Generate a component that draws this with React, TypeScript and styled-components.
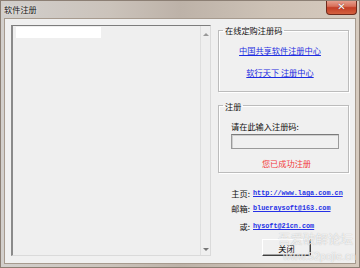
import { Fragment } from 'react';
import { createGlobalStyle, styled } from 'styled-components';

const GlobalStyle = createGlobalStyle`
  html, body {
    margin: 0;
    padding: 0;
    background: #ffffff;
  }
  body {
    font-family: "Noto Sans CJK SC", "Liberation Sans", sans-serif;
  }
`;

const Window = styled.div`
  position: relative;
  width: 360px;
  height: 268px;
  box-sizing: border-box;
  display: flex;
  flex-direction: column;
  border: 1px solid #8c7f74;
  padding: 0 3px 3px 3px;
  background: linear-gradient(
    90deg,
    #d2cfcc 0%,
    #cbc3bb 30%,
    #bdb2a8 50%,
    #cdc2b6 75%,
    #d6cabe 100%
  );
  overflow: hidden;
`;

const TitleBar = styled.div`
  height: 17px;
  display: flex;
  align-items: flex-start;
`;

const Title = styled.span`
  margin-top: 3px;
  font-size: 8.2px;
  line-height: 10px;
  color: #161616;
  text-shadow: 0 0 3px rgba(255, 255, 255, 0.9);
`;

const CloseButton = styled.div`
  margin-left: auto;
  margin-right: -1px;
  margin-top: -1px;
  width: 31px;
  height: 15px;
  box-sizing: border-box;
  border: 1px solid #6e2a1c;
  border-top: none;
  border-radius: 0 0 4px 4px;
  background: linear-gradient(180deg, #e9a796 0%, #d8705a 45%, #c33e26 55%, #d4613f 100%);
  display: flex;
  align-items: center;
  justify-content: center;
  color: #ffffff;
  font-family: "DejaVu Sans", sans-serif;
  font-weight: bold;
  font-size: 10px;
  line-height: 1;
  text-shadow: 0 0 1px #5a1a10;
`;

const Client = styled.div`
  flex: 1;
  display: flex;
  gap: 7px;
  padding: 6px 6px 7px 6px;
  background: #f0f0f0;
  border: 1px solid #a69a8e;
  min-height: 0;
`;

const EditBox = styled.div`
  width: 200px;
  box-sizing: border-box;
  display: flex;
  border-top: 1px solid #7d7d7d;
  border-left: 2px solid #8a8a8a;
  border-right: 1px solid #dadada;
  border-bottom: 1px solid #dadada;
  background: #efefef;
`;

const EditText = styled.div`
  flex: 1;
  padding: 1px 0 0 3px;
`;

const Selection = styled.div`
  width: 85px;
  height: 11px;
  background: #ffffff;
  filter: blur(0.6px);
`;

const ScrollBar = styled.div`
  width: 9px;
  border-left: 1px solid #dedede;
  display: flex;
  flex-direction: column;
  justify-content: space-between;
  align-items: center;
  padding: 7px 0 4px;
`;

const Arrow = styled.div<{ $down?: boolean }>`
  width: 0;
  height: 0;
  border-left: 3px solid transparent;
  border-right: 3px solid transparent;
  ${(p) =>
    p.$down ? 'border-top: 3px solid #777;' : 'border-bottom: 3px solid #999;'}
`;

const SidePane = styled.div`
  width: 131px;
  display: flex;
  flex-direction: column;
`;

const Group = styled.fieldset<{ $height: number; $gap?: number }>`
  margin: ${(p) => p.$gap ?? 0}px 0 0;
  padding: 0 4px;
  height: ${(p) => p.$height}px;
  box-sizing: border-box;
  border: 1px solid #bcbcbc;
  box-shadow: inset 1px 1px 0 #ffffff, 1px 1px 0 #ffffff;
  display: flex;
  flex-direction: column;
`;

const Caption = styled.legend`
  padding: 0 2px;
  font-size: 8.2px;
  line-height: 10px;
  color: #111;
`;

const LinkLine = styled.a<{ $top: number }>`
  display: block;
  margin-top: ${(p) => p.$top}px;
  padding-right: 7px;
  text-align: center;
  font-size: 8.2px;
  line-height: 10px;
  color: #1c2ce0;
  text-decoration: underline;
`;

const FieldLabel = styled.div`
  margin: 10px 0 0 8px;
  font-size: 8.2px;
  line-height: 10px;
  color: #111;
`;

const CodeInput = styled.input`
  margin: 3px 0 0 8px;
  width: 108px;
  height: 15px;
  box-sizing: border-box;
  border: 1px solid #9a9a9a;
  border-top-color: #7a7a7a;
  box-shadow: inset 1px 1px 0 #cfcfcf;
  background: #f0f0f0;
  padding: 0;
`;

const Success = styled.div`
  margin-top: 9px;
  padding-left: 6px;
  text-align: center;
  font-size: 8.2px;
  line-height: 10px;
  color: #f23a3a;
`;

const Contacts = styled.div`
  margin-top: 15px;
  display: grid;
  grid-template-columns: 32px auto;
  column-gap: 3px;
  align-items: center;
`;

const ContactLabel = styled.span<{ $top: number }>`
  margin-top: ${(p) => p.$top}px;
  text-align: right;
  font-size: 8.2px;
  line-height: 10px;
  color: #111;
`;

const MonoLink = styled.a<{ $top: number }>`
  margin-top: ${(p) => p.$top}px;
  font-family: "Liberation Mono", "DejaVu Sans Mono", monospace;
  font-weight: bold;
  font-size: 6.8px;
  line-height: 10px;
  color: #2530e6;
  text-decoration: underline;
`;

const CloseBtn = styled.button`
  margin: 8px 0 0 44px;
  width: 49px;
  height: 17px;
  box-sizing: border-box;
  padding: 0;
  background: #f0f0f0;
  border: 1px solid;
  border-color: #ffffff #404040 #404040 #ffffff;
  box-shadow: inset -1px -1px 0 #a0a0a0;
  font-family: "Noto Sans CJK SC", sans-serif;
  font-size: 8.2px;
  line-height: 10px;
  color: #111;
`;

const Watermark = styled.div`
  position: absolute;
  right: 3px;
  bottom: 5px;
  display: flex;
  flex-direction: column;
  align-items: flex-end;
  pointer-events: none;
  color: rgba(255, 255, 255, 0.8);
  text-shadow: 0 0 1px rgba(90, 90, 90, 0.45);
`;

const MarkCn = styled.span`
  font-size: 12.5px;
  line-height: 14px;
  margin-right: 3px;
`;

const MarkUrl = styled.span`
  font-family: "Liberation Sans", sans-serif;
  font-size: 10.5px;
  line-height: 12px;
  margin-top: 4px;
`;

const contacts = [
  { label: '主页:', url: 'http://www.laga.com.cn', top: 0 },
  { label: '邮箱:', url: 'blueraysoft@163.com', top: 5 },
  { label: '或:', url: 'hysoft@21cn.com', top: 8 },
];

export default function App() {
  return (
    <>
      <GlobalStyle />
      <Window>
        <TitleBar>
          <Title>软件注册</Title>
          <CloseButton>✕</CloseButton>
        </TitleBar>
        <Client>
          <EditBox>
            <EditText>
              <Selection />
            </EditText>
            <ScrollBar>
              <Arrow />
              <Arrow $down />
            </ScrollBar>
          </EditBox>
          <SidePane>
            <Group $height={69}>
              <Caption>在线定购注册码</Caption>
              <LinkLine $top={10}>中国共享软件注册中心</LinkLine>
              <LinkLine $top={12}>软行天下 注册中心</LinkLine>
            </Group>
            <Group $height={75} $gap={9}>
              <Caption>注册</Caption>
              <FieldLabel>请在此输入注册码:</FieldLabel>
              <CodeInput disabled />
              <Success>您已成功注册</Success>
            </Group>
            <Contacts>
              {contacts.map((c) => (
                <Fragment key={c.url}>
                  <ContactLabel $top={c.top}>{c.label}</ContactLabel>
                  <MonoLink $top={c.top}>{c.url}</MonoLink>
                </Fragment>
              ))}
            </Contacts>
            <CloseBtn>关闭</CloseBtn>
          </SidePane>
        </Client>
        <Watermark>
          <MarkCn>吾爱破解论坛</MarkCn>
          <MarkUrl>www.52pojie.cn</MarkUrl>
        </Watermark>
      </Window>
    </>
  );
}
